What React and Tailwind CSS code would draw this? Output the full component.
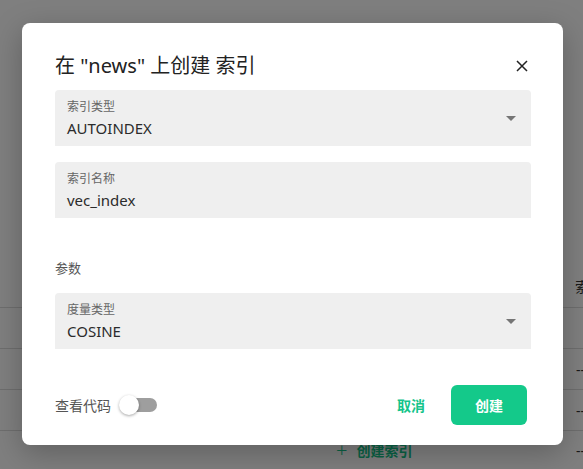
import React, { useState } from 'react';

const font = { fontFamily: '"Noto Sans", "Noto Sans CJK SC", sans-serif' };

const Caret = () => (
  <svg width="10" height="5" viewBox="0 0 10 5" className="shrink-0">
    <path d="M0 0 L10 0 L5 5 Z" fill="#757575" />
  </svg>
);

const Field = ({ label, value, select }) => (
  <div className="flex h-14 items-center justify-between rounded-t-[4px] bg-[#efefef] pl-3 pr-[15px]">
    <div className="flex flex-col">
      <span className="text-[12px] leading-4 text-[#666]">{label}</span>
      <span className="mt-[3px] text-[15px] leading-5 text-[#2b2b2b]">{value}</span>
    </div>
    {select && <Caret />}
  </div>
);

// page behind the dialog, only its edges show
const Page = () => (
  <div className="flex h-full w-full flex-col bg-white text-[14px] text-[#333]">
    <div className="h-[265px]" />
    <div className="flex h-[43px] items-center justify-end border-b border-[#dcdcdc]">
      <span className="w-[8px] overflow-hidden whitespace-nowrap">索引</span>
    </div>
    {['', '--', '--'].map((t, i) => (
      <div key={i} className="flex h-[41px] items-center justify-end border-b border-[#dcdcdc]">
        <span className="w-[7px] overflow-hidden whitespace-nowrap">{t}</span>
      </div>
    ))}
    <div className="flex flex-1 items-center">
      <div className="ml-[336px] flex items-center gap-[9px] font-semibold text-[#14c48a]">
        <span className="text-[20px] font-light leading-none">+</span>
        <span>创建索引</span>
      </div>
      <span className="ml-auto w-[7px] overflow-hidden whitespace-nowrap">--</span>
    </div>
  </div>
);

export default function App() {
  const [showCode, setShowCode] = useState(false);

  return (
    <div className="relative h-[469px] w-[583px] overflow-hidden" style={font}>
      <Page />
      <div className="absolute inset-0 bg-black/50" />

      <div className="absolute left-[22px] top-[23px] flex h-[422px] w-[541px] flex-col rounded-[8px] bg-white pl-[33px] pr-[32px] pt-[29px] shadow-[0_8px_30px_rgba(0,0,0,0.25)]">
        <div className="flex h-7 items-center justify-between">
          <h2 className="text-[20px] leading-7 text-[#222]">在 "news" 上创建 索引</h2>
          <button className="flex h-[18px] w-[18px] items-center justify-center">
            <svg width="12" height="12" viewBox="0 0 12 12">
              <path d="M1 1 L11 11 M11 1 L1 11" stroke="#222" strokeWidth="1.5" />
            </svg>
          </button>
        </div>

        <div className="mt-[10px] flex flex-col gap-4">
          <Field label="索引类型" value="AUTOINDEX" select />
          <Field label="索引名称" value="vec_index" />
        </div>

        <div className="mt-10 text-[13px] leading-5 text-[#555]">参数</div>

        <div className="mt-[15px]">
          <Field label="度量类型" value="COSINE" select />
        </div>

        <div className="mt-9 flex h-10 items-center justify-between pr-1">
          <div className="flex items-center">
            <span className="text-[14px] text-[#555]">查看代码</span>
            <button
              onClick={() => setShowCode(!showCode)}
              className="relative ml-[8px] h-5 w-[38px]"
            >
              <span className="absolute left-[3px] top-[3px] h-[14px] w-[35px] rounded-full bg-[#9e9e9e]" />
              <span
                className={`absolute top-0 h-5 w-5 rounded-full bg-white shadow-[0_1px_3px_rgba(0,0,0,0.35)] ${
                  showCode ? 'left-[18px]' : 'left-0'
                }`}
              />
            </button>
          </div>
          <div className="flex items-center">
            <button className="mr-[26px] text-[14px] font-bold text-[#14c48a]">取消</button>
            <button className="h-10 w-[76px] rounded-[6px] bg-[#14c98a] text-[14px] font-bold text-white">
              创建
            </button>
          </div>
        </div>
      </div>
    </div>
  );
}
